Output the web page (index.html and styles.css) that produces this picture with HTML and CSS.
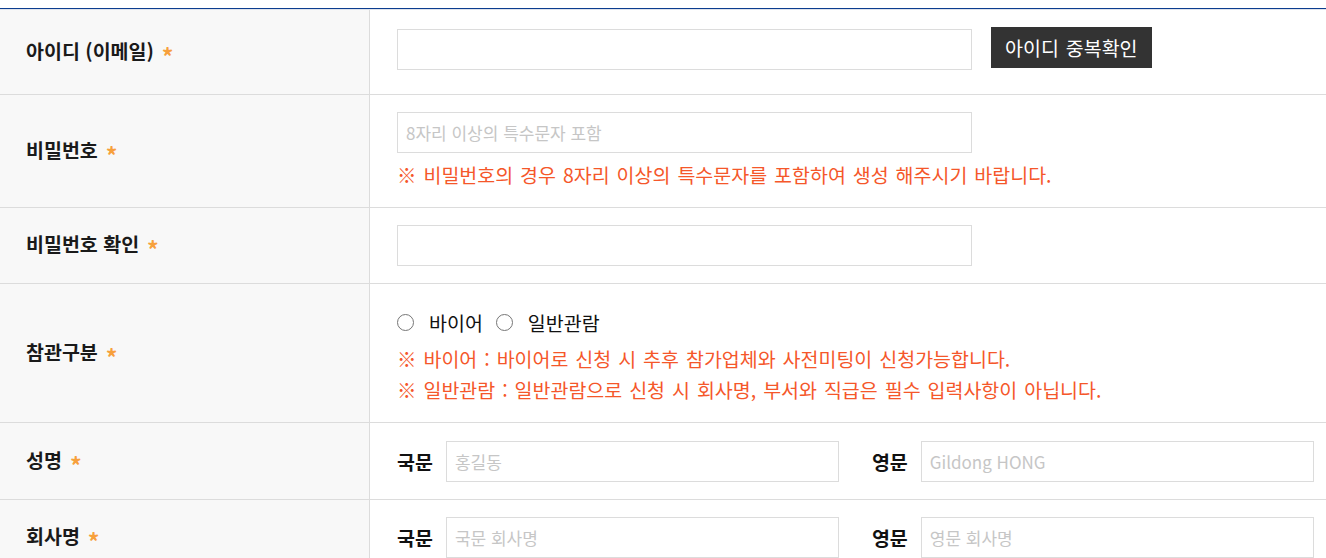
FILE: index.html
```html
<!DOCTYPE html>
<html lang="ko">
<head>
<meta charset="utf-8">
<title>회원가입</title>
<link rel="stylesheet" href="styles.css">
</head>
<body>
<div class="form">
  <div class="row row-id">
    <div class="th"><span>아이디 (이메일)<span class="req">*</span></span></div>
    <div class="td">
      <div class="inline">
        <input class="field field-wide" type="text">
        <button class="btn-dark" type="button">아이디 중복확인</button>
      </div>
    </div>
  </div>
  <div class="row">
    <div class="th"><span>비밀번호<span class="req">*</span></span></div>
    <div class="td">
      <input class="field field-wide" type="password" placeholder="8자리 이상의 특수문자 포함">
      <p class="help help-pw">※ 비밀번호의 경우 8자리 이상의 특수문자를 포함하여 생성 해주시기 바랍니다.</p>
    </div>
  </div>
  <div class="row">
    <div class="th"><span>비밀번호 확인<span class="req">*</span></span></div>
    <div class="td">
      <input class="field field-wide" type="password">
    </div>
  </div>
  <div class="row">
    <div class="th"><span>참관구분<span class="req">*</span></span></div>
    <div class="td">
      <div class="radios">
        <label class="opt"><input class="radio" type="radio" name="kind"><span>바이어</span></label>
        <label class="opt"><input class="radio" type="radio" name="kind"><span>일반관람</span></label>
      </div>
      <p class="help">※ 바이어 : 바이어로 신청 시 추후 참가업체와 사전미팅이 신청가능합니다.</p>
      <p class="help">※ 일반관람 : 일반관람으로 신청 시 회사명, 부서와 직급은 필수 입력사항이 아닙니다.</p>
    </div>
  </div>
  <div class="row row-pair">
    <div class="th"><span>성명<span class="req">*</span></span></div>
    <div class="td">
      <div class="pair">
        <div class="pair-item"><span class="sub">국문</span><input class="field field-half" type="text" placeholder="홍길동"></div>
        <div class="pair-item"><span class="sub">영문</span><input class="field field-half" type="text" placeholder="Gildong HONG"></div>
      </div>
    </div>
  </div>
  <div class="row">
    <div class="th"><span>회사명<span class="req">*</span></span></div>
    <div class="td">
      <div class="pair">
        <div class="pair-item"><span class="sub">국문</span><input class="field field-half" type="text" placeholder="국문 회사명"></div>
        <div class="pair-item"><span class="sub">영문</span><input class="field field-half" type="text" placeholder="영문 회사명"></div>
      </div>
    </div>
  </div>
</div>
</body>
</html>
```
FILE: styles.css
```css
* { box-sizing: border-box; }

body {
  margin: 0;
  padding-top: 8px;
  font-family: "Noto Sans CJK KR", "Noto Sans", sans-serif;
  font-size: 19.5px;
  color: #222;
  word-spacing: 1.5px;
  background: #fff;
}

.form {
  border-top: 1px solid #0b3d8f;
}

.row {
  display: grid;
  grid-template-columns: 370px 1fr;
  border-bottom: 1px solid #dcdcdc;
}

.row:first-child {
  border-top: 1px solid #dfe3ec;
}

.th {
  display: flex;
  align-items: center;
  padding-left: 26px;
  padding-top: 4px;
  background: #f8f8f8;
  border-right: 1px solid #dcdcdc;
  font-weight: 700;
  color: #1a1a1a;
  line-height: 1;
  word-spacing: 0;
  white-space: nowrap;
}

.req {
  display: inline-block;
  margin-left: 8px;
  color: #f7a03c;
  font-size: 23px;
  vertical-align: -7px;
}

.td {
  padding: 17px 11px 17px 27px;
  min-width: 0;
}

.row-id .td {
  padding-top: 19px;
  padding-bottom: 24px;
}

.row-pair .td {
  padding-top: 18px;
}

.inline {
  display: flex;
  align-items: flex-start;
  gap: 19px;
}

.field {
  display: block;
  flex-shrink: 0;
  height: 41px;
  border: 1px solid #dcdcdc;
  background: #fff;
  padding: 0 8px;
  font-family: "Noto Sans CJK KR", "Noto Sans", sans-serif;
  font-size: 17px;
  word-spacing: 0;
  color: #222;
  outline: none;
}

.field::placeholder {
  color: #c6c6c6;
}

.field-wide { width: 575px; }
.field-half { width: 393px; }

.btn-dark {
  flex-shrink: 0;
  height: 41px;
  margin-top: -2px;
  padding: 0 14px;
  border: 0;
  background: #333;
  color: #fff;
  font-family: "Noto Sans CJK KR", "Noto Sans", sans-serif;
  font-size: 19.5px;
  word-spacing: 1.5px;
  white-space: nowrap;
}

.help {
  margin: 0;
  color: #f5572a;
  line-height: 31px;
  white-space: nowrap;
}

.help-pw {
  margin-top: 7px;
  line-height: 30px;
}

.radios {
  display: flex;
  align-items: center;
  gap: 13px;
  height: 42px;
  color: #111;
}

.opt {
  display: flex;
  align-items: center;
  gap: 15px;
}

.radio {
  appearance: none;
  -webkit-appearance: none;
  flex-shrink: 0;
  width: 17px;
  height: 17px;
  margin: 0;
  border: 1.5px solid #767676;
  border-radius: 50%;
  background: #fff;
}

.pair {
  display: flex;
  gap: 33px;
}

.pair-item {
  display: flex;
  align-items: center;
  gap: 13px;
  flex-shrink: 0;
}

.sub {
  font-weight: 700;
  color: #111;
  word-spacing: 0;
  white-space: nowrap;
}
```
